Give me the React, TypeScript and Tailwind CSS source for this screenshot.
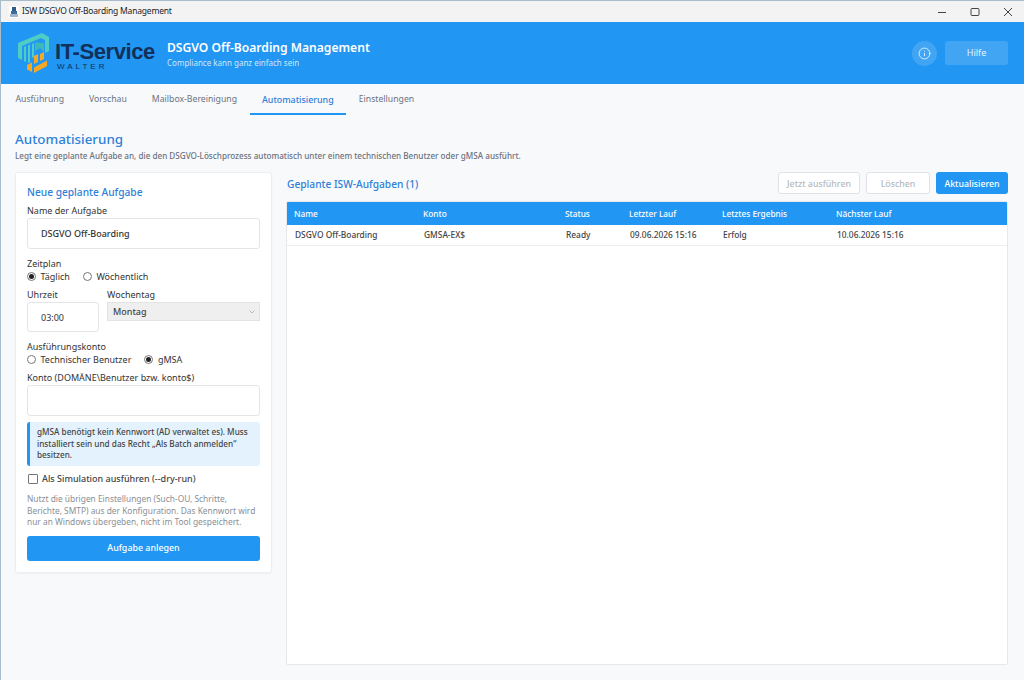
import { Info } from 'lucide-react'

const tabs = ['Ausführung', 'Vorschau', 'Mailbox-Bereinigung', 'Automatisierung', 'Einstellungen']

const columns = [
  { label: 'Name', value: 'DSGVO Off-Boarding', width: 'w-[129px]' },
  { label: 'Konto', value: 'GMSA-EX$', width: 'w-[142px]' },
  { label: 'Status', value: 'Ready', width: 'w-[64px]' },
  { label: 'Letzter Lauf', value: '09.06.2026 15:16', width: 'w-[93px]' },
  { label: 'Letztes Ergebnis', value: 'Erfolg', width: 'w-[114px]' },
  { label: 'Nächster Lauf', value: '10.06.2026 15:16', width: 'flex-1' },
]

function Logo() {
  return (
    <div className="flex items-start w-[139px] h-[40px]">
      <svg width="33" height="40" viewBox="0 0 33 40" className="shrink-0 ml-[1px]">
        <path d="M0 10 L24 0 L31 4 L31 18 L27 20 L27 7 L23 5 L4 13 L4 27 L0 25 Z" fill="#4fcdc5" />
        <path d="M6 14 L8 13 L8 29 L6 28 Z M10 12.500 L12 11.500 L12 30 L10 29.500 Z M14 11 L16 10 L16 24 L14 25 Z" fill="#4fcdc5" />
        <path d="M17 9.500 L26 10 L26 19 L22 15 L17 18 Z" fill="#3fb8b8" />
        <path d="M9 32 L14 29.500 L14 39 L9 36.500 Z" fill="#f7a823" />
        <path d="M16 23 L20 21 L20 29 L16 31 Z M16 34.500 L29 27.500 L29 33 L16 40 Z M22 21 L26 19 L26 26 L22 28 Z" fill="#f7a823" />
      </svg>
      <div className="ml-[4px] mt-[7px] flex flex-col">
        <span className="text-[22px] leading-[24px] font-bold text-[#12305a] tracking-[-0.4px] font-['Liberation_Sans',sans-serif] whitespace-nowrap">IT-Service</span>
        <span className="text-[8px] leading-[9px] mt-[-2px] text-[#12305a] tracking-[3px] ml-[2px] font-['Liberation_Sans',sans-serif]">WALTER</span>
      </div>
    </div>
  )
}

function Radio({ label, checked }: { label: string; checked?: boolean }) {
  return (
    <span className="flex items-center gap-[4.500px]">
      <span className="w-[9px] h-[9px] rounded-full border border-[#767676] bg-white flex items-center justify-center">
        {checked && <span className="w-[5px] h-[5px] rounded-full bg-[#222]" />}
      </span>
      {label}
    </span>
  )
}

export default function App() {
  return (
    <div className="w-[1024px] h-[680px] overflow-hidden flex flex-col bg-[#f8f9fb] border-l border-[#a9bccb] font-['Noto_Sans',sans-serif] text-[#333]">
      {/* title bar */}
      <div className="h-[22px] shrink-0 bg-[#f3f3f3] border-t border-[#a9bccb] flex items-center pl-[8px] text-[8.500px] tracking-[-0.2px] text-[#1c1c1c]">
        <svg width="10" height="12" viewBox="0 0 10 12" className="mr-[3px]">
          <rect x="0" y="0" width="10" height="12" fill="#fff" />
          <rect x="3" y="1" width="4" height="4" fill="#2c5a8c" />
          <rect x="2" y="5" width="6" height="3" fill="#3f6f9f" />
          <rect x="1" y="8" width="8" height="3" fill="#9fb6cc" />
        </svg>
        <span>ISW DSGVO Off-Boarding Management</span>
        <div className="ml-auto flex items-center gap-[23px] pr-[11px]">
          <svg width="10" height="10" viewBox="0 0 10 10"><path d="M1 5.500 H9" stroke="#444" strokeWidth="1" /></svg>
          <svg width="10" height="10" viewBox="0 0 10 10"><rect x="1" y="1.500" width="8" height="7" rx="1" fill="none" stroke="#444" strokeWidth="1" /></svg>
          <svg width="10" height="10" viewBox="0 0 10 10"><path d="M1 1 L9 9 M9 1 L1 9" stroke="#444" strokeWidth="1" /></svg>
        </div>
      </div>

      {/* header */}
      <div className="h-[62px] shrink-0 bg-[#2196f3] flex items-center pl-[16px] pr-[16px]">
        <Logo />
        <div className="ml-[11px] flex flex-col text-white">
          <span className="text-[12.100px] leading-[18px] pt-[1px] font-semibold">DSGVO Off-Boarding Management</span>
          <span className="text-[8px] leading-[12px] text-[#cfe8fc]">Compliance kann ganz einfach sein</span>
        </div>
        <div className="ml-auto flex items-center gap-[8px]">
          <div className="w-[25px] h-[25px] rounded-full bg-white/15 flex items-center justify-center">
            <Info size={13} className="text-white/90" strokeWidth={1.6} />
          </div>
          <div className="w-[63px] h-[24px] rounded-[3px] bg-white/15 text-[#e3f2fd] text-[9px] flex items-center justify-center">Hilfe</div>
        </div>
      </div>

      {/* tabs */}
      <div className="h-[31px] shrink-0 flex pl-[2px] text-[8.700px] text-[#6b7280]">
        {tabs.map((t) => {
          const active = t === 'Automatisierung'
          return (
            <div
              key={t}
              className={`h-[31px] px-[12.500px] pt-[3px] flex items-center border-b-2 ${active ? 'border-[#2196f3] text-[#2f80d8] font-medium text-[8.900px]' : 'border-transparent'}`}
            >
              {t}
            </div>
          )
        })}
      </div>

      {/* content */}
      <div className="flex-1 min-h-0 flex flex-col pl-[14px] pr-[16px] pt-[14px] pb-[15px]">
        <div className="text-[13.400px] leading-[20px] font-medium text-[#2f80d8]">Automatisierung</div>
        <div className="text-[8.150px] leading-[12px] mt-[1px] font-medium text-[#6b7280]">
          Legt eine geplante Aufgabe an, die den DSGVO-Löschprozess automatisch unter einem technischen Benutzer oder gMSA ausführt.
        </div>

        <div className="flex-1 min-h-0 flex gap-[14px] mt-[10px]">
          {/* form card */}
          <div className="w-[257px] h-[401px] shrink-0 bg-white rounded-[3px] border border-[#eceef1] shadow-[0_1px_2px_rgba(0,0,0,0.04)] px-[11px] pt-[12px] text-[9px] text-[#333]">
            <div className="text-[10.200px] leading-[15px] font-medium text-[#2f80d8]">Neue geplante Aufgabe</div>
            <div className="leading-[14px] mt-[4px]">Name der Aufgabe</div>
            <div className="h-[31px] pt-[1px] rounded-[3px] border border-[#e3e5e8] flex items-center pl-[13px] font-medium">DSGVO Off-Boarding</div>
            <div className="leading-[13px] mt-[8px]">Zeitplan</div>
            <div className="flex gap-[13px] h-[13px] items-center">
              <Radio label="Täglich" checked />
              <Radio label="Wöchentlich" />
            </div>
            <div className="flex gap-[8px] mt-[5px]">
              <div className="w-[72px]">
                <div className="leading-[14px]">Uhrzeit</div>
                <div className="h-[30px] pt-[2px] rounded-[3px] border border-[#e3e5e8] flex items-center pl-[13px]">03:00</div>
              </div>
              <div className="flex-1">
                <div className="leading-[14px]">Wochentag</div>
                <div className="h-[19px] bg-[#efefef] border border-[#e3e3e3] flex items-center justify-between pl-[5px] pr-[4px]">
                  <span className="font-medium text-[#444]">Montag</span>
                  <svg width="6" height="4" viewBox="0 0 6 4"><path d="M0.500 0.500 L3 3 L5.500 0.500" fill="none" stroke="#bbb" strokeWidth="1" /></svg>
                </div>
              </div>
            </div>
            <div className="leading-[13px] mt-[8px]">Ausführungskonto</div>
            <div className="flex gap-[13px] h-[13px] items-center">
              <Radio label="Technischer Benutzer" />
              <Radio label="gMSA" checked />
            </div>
            <div className="leading-[14px] mt-[5px]">Konto (DOMÄNE\Benutzer bzw. konto$)</div>
            <div className="h-[31px] rounded-[3px] border border-[#e3e5e8]" />
            <div className="mt-[6px] h-[44px] rounded-[3px] bg-[#e3f2fd] border-l-[3px] border-[#2196f3] pl-[7px] pt-[4px] text-[8.200px] leading-[11.500px] text-[#444] font-medium">
              gMSA benötigt kein Kennwort (AD verwaltet es). Muss installiert sein und das Recht „Als Batch anmelden“ besitzen.
            </div>
            <div className="flex items-center gap-[4px] mt-[6px] h-[14px]">
              <span className="w-[10px] h-[10px] ml-[1px] border border-[#767676] rounded-[1px] bg-white" />
              <span className="font-medium text-[#444]">Als Simulation ausführen (--dry-run)</span>
            </div>
            <div className="mt-[7px] text-[8.370px] leading-[11.500px] text-[#8a8f96]">
              Nutzt die übrigen Einstellungen (Such-OU, Schritte, Berichte, SMTP) aus der Konfiguration. Das Kennwort wird nur an Windows übergeben, nicht im Tool gespeichert.
            </div>
            <div className="mt-[8px] h-[25px] rounded-[3px] bg-[#2196f3] text-white text-[8.900px] font-medium flex items-center justify-center">Aufgabe anlegen</div>
          </div>

          {/* task list */}
          <div className="flex-1 min-w-0 flex flex-col">
            <div className="h-[22px] flex items-center">
              <div className="text-[10.200px] pt-[3px] font-medium text-[#2f80d8] ml-[1px]">Geplante ISW-Aufgaben (1)</div>
              <div className="ml-auto flex gap-[6px] text-[8.800px] font-medium">
                <div className="w-[82px] h-[22px] pt-[3px] rounded-[3px] bg-white border border-[#dfe2e6] text-[#b4b9bf] flex items-center justify-center">Jetzt ausführen</div>
                <div className="w-[64px] h-[22px] pt-[3px] rounded-[3px] bg-white border border-[#dfe2e6] text-[#b4b9bf] flex items-center justify-center">Löschen</div>
                <div className="w-[72px] h-[22px] pt-[3px] rounded-[3px] bg-[#2196f3] text-white flex items-center justify-center">Aktualisieren</div>
              </div>
            </div>
            <div className="flex-1 mt-[7px] bg-white border border-[#e6e8eb] rounded-[2px] overflow-hidden">
              <div className="h-[23px] pt-[1px] bg-[#2196f3] flex items-center pl-[7px] text-[8.300px] font-medium text-white">
                {columns.map((c) => (
                  <div key={c.label} className={c.width}>{c.label}</div>
                ))}
              </div>
              <div className="h-[21px] pt-[1px] border-b border-[#eceef1] flex items-center pl-[8px] text-[8.400px] font-medium text-[#444]">
                {columns.map((c) => (
                  <div key={c.label} className={c.width}>{c.value}</div>
                ))}
              </div>
            </div>
          </div>
        </div>
      </div>
    </div>
  )
}
